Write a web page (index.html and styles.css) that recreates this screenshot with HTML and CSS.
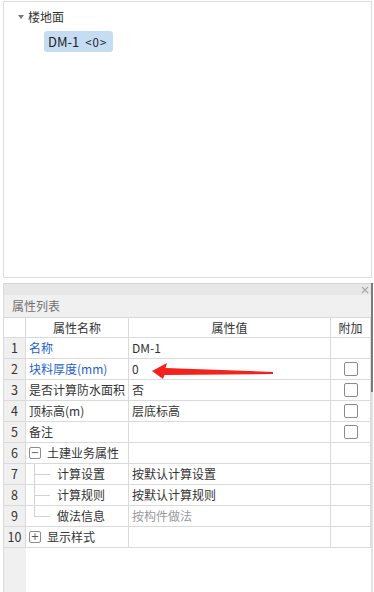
FILE: index.html
```html
<!DOCTYPE html>
<html lang="zh">
<head>
<meta charset="utf-8">
<title>属性列表</title>
<link rel="stylesheet" href="styles.css">
</head>
<body>
<div class="top">
  <div class="tree-root"><span class="caret"></span><span>楼地面</span></div>
  <div class="tree-child"><span class="chip"><span>DM-1</span><span class="chip-sub">&lt;0&gt;</span></span></div>
</div>
<div class="bottom">
  <div class="main">
    <div class="titlebar">
      <svg class="close" width="8" height="8" viewBox="0 0 8 8"><path d="M1 1L7 7M7 1L1 7" stroke="#a8a8a8" stroke-width="1.1" fill="none"/></svg>
    </div>
    <div class="caption">属性列表</div>
    <div class="grid">
      <div class="row head">
        <div class="c num"></div>
        <div class="c center">属性名称</div>
        <div class="c center">属性值</div>
        <div class="c center">附加</div>
      </div>
      <div class="row">
        <div class="c num">1</div>
        <div class="c blue">名称</div>
        <div class="c">DM-1</div>
        <div class="c chk"></div>
      </div>
      <div class="row">
        <div class="c num">2</div>
        <div class="c blue">块料厚度(mm)</div>
        <div class="c">0</div>
        <div class="c chk"><span class="box"></span></div>
      </div>
      <div class="row">
        <div class="c num">3</div>
        <div class="c">是否计算防水面积</div>
        <div class="c">否</div>
        <div class="c chk"><span class="box"></span></div>
      </div>
      <div class="row">
        <div class="c num">4</div>
        <div class="c">顶标高(m)</div>
        <div class="c">层底标高</div>
        <div class="c chk"><span class="box"></span></div>
      </div>
      <div class="row">
        <div class="c num">5</div>
        <div class="c">备注</div>
        <div class="c"></div>
        <div class="c chk"><span class="box"></span></div>
      </div>
      <div class="row">
        <div class="c num">6</div>
        <div class="c group"><span class="toggle">−</span><span>土建业务属性</span></div>
        <div class="c"></div>
        <div class="c chk"></div>
      </div>
      <div class="row">
        <div class="c num">7</div>
        <div class="c sub"><span class="elbow"></span><span>计算设置</span></div>
        <div class="c">按默认计算设置</div>
        <div class="c chk"></div>
      </div>
      <div class="row">
        <div class="c num">8</div>
        <div class="c sub"><span class="elbow"></span><span>计算规则</span></div>
        <div class="c">按默认计算规则</div>
        <div class="c chk"></div>
      </div>
      <div class="row">
        <div class="c num">9</div>
        <div class="c sub"><span class="elbow last"></span><span>做法信息</span></div>
        <div class="c muted">按构件做法</div>
        <div class="c chk"></div>
      </div>
      <div class="row">
        <div class="c num">10</div>
        <div class="c group"><span class="toggle">+</span><span>显示样式</span></div>
        <div class="c"></div>
        <div class="c chk"></div>
      </div>
    </div>
    <div class="filler"></div>
  </div>
  <div class="scroll"><div class="thumb"></div></div>
</div>
<svg class="arrow" width="126" height="22" viewBox="0 0 126 22">
  <polygon points="2,11 17,3 15.5,8 123,12 123,14 14.5,15 13,19" fill="#f3221c"/>
</svg>
</body>
</html>
```

FILE: styles.css
```css
* { box-sizing: border-box; }
html, body { margin: 0; padding: 0; }
body {
  width: 374px;
  height: 592px;
  background: #ffffff;
  font-family: "Noto Sans CJK SC", "Microsoft YaHei", sans-serif;
  font-size: 12px;
  color: #333333;
  position: relative;
  overflow: hidden;
}

/* top tree panel */
.top {
  margin: 1px 0 0 3px;
  width: 369px;
  height: 277px;
  border: 1px solid #dddddd;
  padding-top: 5px;
}
.tree-root {
  display: flex;
  align-items: center;
  height: 20px;
  line-height: 20px;
  padding-left: 14px;
  color: #333;
}
.caret {
  width: 0;
  height: 0;
  border-left: 3px solid transparent;
  border-right: 3px solid transparent;
  border-top: 4px solid #777;
  margin-right: 4px;
}
.tree-child {
  margin-top: 4px;
  padding-left: 40px;
  display: flex;
}
.chip {
  display: inline-flex;
  align-items: baseline;
  gap: 6px;
  height: 21px;
  line-height: 21px;
  padding: 0 6px 0 4px;
  background: #c6dcf2;
  border-radius: 3px;
  font-size: 13px;
  color: #222;
}
.chip-sub { font-size: 11.5px; letter-spacing: 1px; }

/* bottom property panel */
.bottom {
  margin: 5px 0 0 3px;
  width: 370px;
  height: 309px;
  display: flex;
}
.main {
  width: 368px;
  display: flex;
  flex-direction: column;
  border-left: 1px solid #dadada;
}
.scroll {
  width: 2px;
  background: #e2e2e2;
}
.thumb {
  height: 109px;
  background: #7a7a7a;
}
.titlebar {
  height: 12px;
  background: #e7e7e7;
  border-top: 1px solid #d4d4d4;
  display: flex;
  justify-content: flex-end;
  align-items: center;
  padding-right: 2px;
}
.close { display: block; }
.caption {
  height: 22px;
  line-height: 22px;
  background: #f0f0f0;
  color: #707070;
  padding-left: 8px;
}
.grid {
  border-top: 1px solid #d8d8d8;
}
.row {
  display: grid;
  grid-template-columns: 22px 103px 202px 40px;
  height: 21px;
  border-bottom: 1px solid #dadada;
}
.row.head { height: 20px; }
.c {
  border-right: 1px solid #dadada;
  padding-left: 3px;
  line-height: 20px;
  white-space: nowrap;
  overflow: hidden;
  display: flex;
  align-items: center;
}
.row.head .c { line-height: 19px; }
.c.num {
  background: #f0f0f0;
  justify-content: center;
  padding-left: 0;
  color: #333;
  font-size: 12.5px;
}
.row.head .c.num { background: #ffffff; }
.c.center { justify-content: center; padding-left: 0; color: #333; }
.c.blue { color: #1c5fd4; }
.c.muted { color: #9a9a9a; }
.c.chk { justify-content: center; padding-left: 0; }
.box {
  width: 14px;
  height: 14px;
  border: 1px solid #8a8a8a;
  border-radius: 2px;
  background: #fff;
}
.group { padding-left: 3px; }
.toggle {
  width: 12px;
  height: 12px;
  border: 1px solid #8c8c8c;
  border-radius: 2px;
  font-size: 10px;
  line-height: 10px;
  display: flex;
  align-items: center;
  justify-content: center;
  color: #555;
  margin-right: 6px;
  font-family: "DejaVu Sans", sans-serif;
}
.sub { align-items: stretch; }
.sub span:last-child { display: flex; align-items: center; }
.elbow {
  width: 16px;
  margin-left: 5px;
  margin-right: 7px;
  background:
    linear-gradient(#d2d2d2, #d2d2d2) left top / 1px 100% no-repeat,
    linear-gradient(#d2d2d2, #d2d2d2) left center / 100% 1px no-repeat;
}
.elbow.last {
  background:
    linear-gradient(#d2d2d2, #d2d2d2) left top / 1px 50% no-repeat,
    linear-gradient(#d2d2d2, #d2d2d2) left center / 100% 1px no-repeat;
}
.filler {
  flex: 1;
  background: linear-gradient(to right, #f0f0f0 0, #f0f0f0 22px, #ffffff 22px);
}

/* annotation arrow over the table */
.arrow {
  position: absolute;
  left: 150px;
  top: 360px;
}
```
